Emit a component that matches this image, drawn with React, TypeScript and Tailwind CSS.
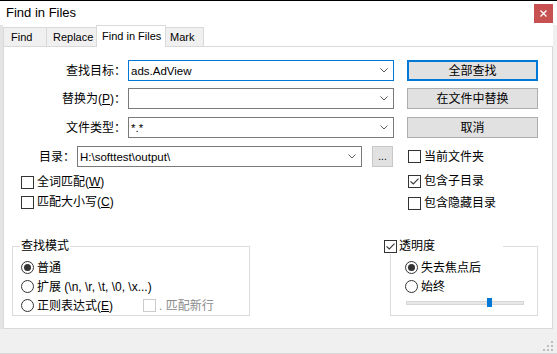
import type { ReactNode } from 'react'

// ---------------------------------------------------------------------------
// Small Win32-looking controls
// ---------------------------------------------------------------------------

function Chevron() {
  return (
    <svg width="8" height="5" viewBox="0 0 8 5" className="shrink-0">
      <path d="M0.5 0.5 L4 4 L7.5 0.5" fill="none" stroke="#5a5a5a" strokeWidth="1" />
    </svg>
  )
}

function Combo({ value, className, focused }: { value: string; className: string; focused?: boolean }) {
  return (
    <div
      className={`flex h-[21px] items-center border bg-white pl-[2px] pr-[5px] ${
        focused ? 'border-[#0078d7]' : 'border-[#7a7a7a]'
      } ${className}`}
    >
      <span className="flex-1 truncate text-[11.5px] leading-[14px]">{value}</span>
      <Chevron />
    </div>
  )
}

function Btn({ children, focused }: { children: ReactNode; focused?: boolean }) {
  return (
    <div
      className={`ml-[13px] flex h-[21px] w-[131px] items-center justify-center bg-[#e1e1e1] ${
        focused ? 'border-2 border-[#0078d7]' : 'border border-[#adadad]'
      }`}
    >
      {children}
    </div>
  )
}

function Check({ checked, disabled }: { checked?: boolean; disabled?: boolean }) {
  return (
    <span
      className={`flex h-[13px] w-[13px] shrink-0 items-center justify-center border bg-white ${
        disabled ? 'border-[#cccccc]' : 'border-[#333333]'
      }`}
    >
      {checked && (
        <svg width="9" height="7" viewBox="0 0 9 7">
          <path d="M0.5 3.3 L3.3 6 L8.5 0.6" fill="none" stroke="#333333" strokeWidth="1.1" />
        </svg>
      )}
    </span>
  )
}

function Radio({ checked }: { checked?: boolean }) {
  return (
    <span className="flex h-[13px] w-[13px] shrink-0 items-center justify-center rounded-full border border-[#333333] bg-white">
      {checked && <span className="h-[7px] w-[7px] rounded-full bg-[#333333]" />}
    </span>
  )
}

function Key({ k }: { k: string }) {
  return (
    <>
      (<span className="underline underline-offset-1">{k}</span>)
    </>
  )
}

// ---------------------------------------------------------------------------
// App
// ---------------------------------------------------------------------------

export default function App() {
  return (
    <div className="flex h-[354px] w-[557px] flex-col overflow-hidden border-t border-black bg-[#f0f0f0] font-['Liberation_Sans','Noto_Sans_CJK_SC',sans-serif] text-[12px] text-black">
      {/* Title bar */}
      <div className="flex h-[24px] shrink-0 items-center justify-between bg-white pl-[6px] pr-[4px]">
        <span className="text-[13px]">Find in Files</span>
        <div className="flex h-[19px] w-[19px] items-center justify-center bg-[#c75050]">
          <svg width="7" height="7" viewBox="0 0 7 7">
            <path d="M0.5 0.5 L6.5 6.5 M6.5 0.5 L0.5 6.5" stroke="#ffffff" strokeWidth="1.3" />
          </svg>
        </div>
      </div>

      {/* Body */}
      <div className="flex h-[304px] shrink-0">
        <div className="w-[3px] bg-[#e4e4e4]" />
        <div className="flex w-[550px] flex-col bg-white">
          {/* Tabs */}
          <div className="flex h-[21px] items-end whitespace-nowrap text-[11px]">
            <div className="flex h-[19px] w-[43px] items-center border-l border-t border-[#d9d9d9] bg-[#f0f0f0] pl-[7px]">Find</div>
            <div className="flex h-[19px] w-[50px] items-center border-l border-t border-[#d9d9d9] bg-[#f0f0f0] pl-[6px]">Replace</div>
            <div className="relative z-10 -mb-px flex h-[22px] w-[70px] items-center border-x border-t border-[#d9d9d9] bg-white pl-[5px]">
              Find in Files
            </div>
            <div className="flex h-[19px] w-[38px] items-center border-r border-t border-[#d9d9d9] bg-[#f0f0f0] pl-[4px]">Mark</div>
          </div>

          {/* Panel */}
          <div className="flex h-[283px] flex-col border border-[#d9d9d9] bg-white pt-[13px]">
            <div className="flex h-[21px] items-center">
              <span className="w-[122px] text-right">查找目标：</span>
              <Combo className="ml-[2px] w-[266px]" value="ads.AdView" focused />
              <Btn focused>全部查找</Btn>
            </div>
            <div className="mt-[7px] flex h-[21px] items-center">
              <span className="w-[122px] text-right">
                替换为<Key k="P" />：
              </span>
              <Combo className="ml-[2px] w-[266px]" value="" />
              <Btn>在文件中替换</Btn>
            </div>
            <div className="mt-[8px] flex h-[21px] items-center">
              <span className="w-[122px] text-right">文件类型：</span>
              <Combo className="ml-[2px] w-[266px]" value="*.*" />
              <Btn>取消</Btn>
            </div>
            <div className="mt-[8px] flex h-[21px] items-center">
              <span className="w-[71px] text-right">目录：</span>
              <Combo className="ml-[2px] w-[285px]" value="H:\softtest\output\" />
              <div className="ml-[10px] flex h-[21px] w-[21px] items-end justify-center border border-[#c8c8c8] bg-[#e1e1e1] pb-[4px] text-[10px] leading-none">
                ...
              </div>
              <div className="ml-[15px] flex items-center gap-[3px]">
                <Check />
                <span>当前文件夹</span>
              </div>
            </div>

            {/* Options */}
            <div className="mt-[3px] flex items-start">
              <div className="mt-[2px] flex w-[404px] flex-col pl-[17px]">
                <div className="flex h-[20px] items-center gap-[3px]">
                  <Check />
                  <span>
                    全词匹配<Key k="W" />
                  </span>
                </div>
                <div className="flex h-[20px] items-center gap-[3px]">
                  <Check />
                  <span>
                    匹配大小写<Key k="C" />
                  </span>
                </div>
              </div>
              <div className="flex flex-col">
                <div className="flex h-[22px] items-center gap-[3px]">
                  <Check checked />
                  <span>包含子目录</span>
                </div>
                <div className="flex h-[22px] items-center gap-[3px]">
                  <Check />
                  <span>包含隐藏目录</span>
                </div>
              </div>
            </div>

            {/* Groups */}
            <div className="mt-[24px] flex items-start pl-[8px]">
              <fieldset className="h-[78px] w-[238px] border border-[#dcdcdc] pl-[8px]">
                <legend className="-ml-px px-px leading-[16px]">查找模式</legend>
                <div className="flex flex-col pt-[4px]">
                  <div className="flex h-[19px] items-center gap-[3px]">
                    <Radio checked />
                    <span>普通</span>
                  </div>
                  <div className="flex h-[19px] items-center gap-[3px]">
                    <Radio />
                    <span>扩展 (\n, \r, \t, \0, \x...)</span>
                  </div>
                  <div className="flex h-[19px] items-center">
                    <Radio />
                    <span className="ml-[3px] w-[106px]">
                      正则表达式<Key k="E" />
                    </span>
                    <Check disabled />
                    <span className="ml-[3px] text-[#8c8c8c]">. 匹配新行</span>
                  </div>
                </div>
              </fieldset>

              <fieldset className="ml-[140px] h-[78px] w-[148px] border border-[#dcdcdc] pl-[14px]">
                <legend className="-ml-[21px] flex w-[119px] items-center gap-[2px] leading-[16px]">
                  <Check checked />
                  <span>透明度</span>
                </legend>
                <div className="flex flex-col pt-[4px]">
                  <div className="flex h-[19px] items-center gap-[3px]">
                    <Radio checked />
                    <span>失去焦点后</span>
                  </div>
                  <div className="flex h-[19px] items-center gap-[3px]">
                    <Radio />
                    <span>始终</span>
                  </div>
                  <div className="ml-px flex h-[13px] w-[118px] items-center">
                    <div className="relative h-[4px] w-full border border-[#d6d6d6] bg-[#e7e7e7]">
                      <span className="absolute left-[80px] top-[-4px] h-[9px] w-[5px] bg-[#0078d7]" />
                    </div>
                  </div>
                </div>
              </fieldset>
            </div>
          </div>
        </div>
        <div className="flex-1 bg-[#f0f0f0]" />
      </div>

      {/* Bottom strip with size grip */}
      <div className="flex flex-1 items-end justify-end border-b border-[#d8d8d8] pb-[1px] pr-[3px]">
        <svg width="11" height="11" viewBox="0 0 11 11">
          <g fill="#bdbdbd">
            <rect x="8" y="0" width="2" height="2" />
            <rect x="4" y="4" width="2" height="2" />
            <rect x="8" y="4" width="2" height="2" />
            <rect x="0" y="8" width="2" height="2" />
            <rect x="4" y="8" width="2" height="2" />
            <rect x="8" y="8" width="2" height="2" />
          </g>
        </svg>
      </div>
    </div>
  )
}
